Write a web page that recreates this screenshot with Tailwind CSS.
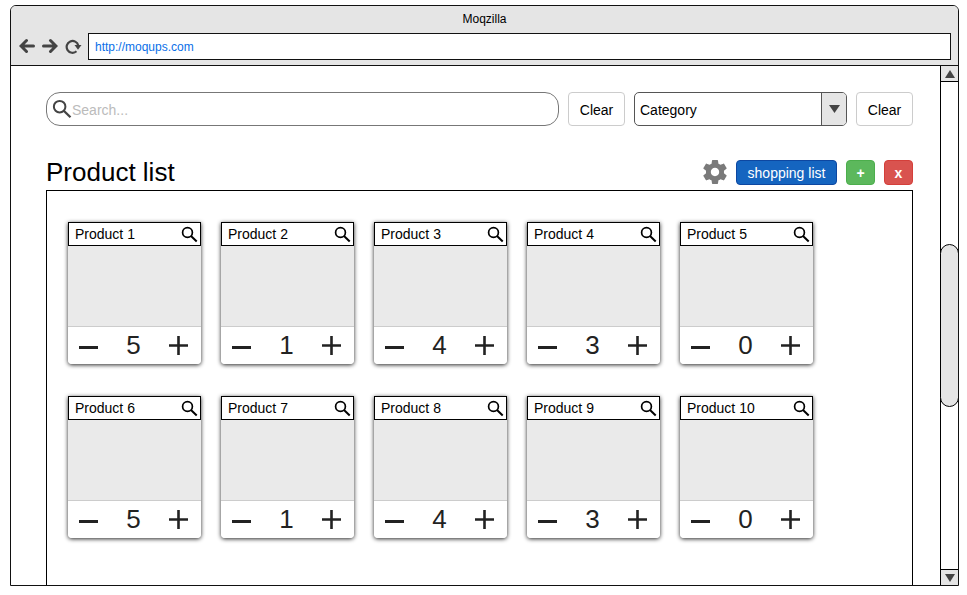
<!DOCTYPE html>
<html lang="en">
<head>
<meta charset="utf-8">
<meta name="viewport" content="width=device-width, initial-scale=1">
<title>Moqzilla</title>
<script src="https://cdn.jsdelivr.net/npm/@tailwindcss/browser@4"></script>
</head>
<body class="bg-white font-['Liberation_Sans',Arial,sans-serif] text-sm text-black">
<svg class="hidden" aria-hidden="true">
  <symbol id="lens" viewBox="0 0 17 17"><circle cx="6.500" cy="6.500" r="4.900" fill="none" stroke="currentColor" stroke-width="1.700"/><path d="M10 10l5.700 5.500" fill="none" stroke="currentColor" stroke-width="2"/></symbol>
  <symbol id="minus" viewBox="0 0 19 19"><path d="M0 10h19v3H0z" fill="#222"/></symbol>
  <symbol id="plus" viewBox="0 0 19 19"><path d="M8.200 0h2.600v8.200H19v2.600h-8.200V19H8.200v-8.200H0V8.200h8.200z" fill="#222"/></symbol>
</svg>
<div class="flex h-screen flex-col pt-[5px] pr-2 pb-[9px] pl-[10px]">
  <div class="flex min-h-0 flex-1 flex-col overflow-hidden rounded-t-md border border-[#111] bg-white">
    <header class="border-b border-[#111] bg-[#e5e5e5] pb-[5px]">
      <div class="py-[5px] text-center text-xs leading-[17px]">Moqzilla</div>
      <div class="flex items-center pr-[7px] pl-2 text-[#444]">
        <nav class="flex gap-[7px] pb-px" aria-label="Browser">
          <button type="button" aria-label="Back"><svg class="block size-4" viewBox="0 0 16 16" fill="none" stroke="currentColor" stroke-width="3" stroke-linecap="round"><path d="M14.500 8H2.500M7.500 2.500L2 8l5.500 5.500"/></svg></button>
          <button type="button" aria-label="Forward"><svg class="block size-4" viewBox="0 0 16 16" fill="none" stroke="currentColor" stroke-width="3" stroke-linecap="round"><path d="M1.500 8h12M8.500 2.500L14 8l-5.500 5.500"/></svg></button>
          <button type="button" aria-label="Reload"><svg class="block size-[17px]" viewBox="0 0 17 17" fill="none" stroke="currentColor" stroke-width="2.200"><path d="M11.500 13.300A5.900 5.900 0 1 1 13.300 7.500"/><path d="M9.500 7h7l-3.500 4.800z" fill="currentColor" stroke="none"/></svg></button>
        </nav>
        <input type="url" aria-label="Address" value="http://moqups.com" class="ml-1.5 h-[27px] min-w-0 flex-1 border border-[#111] bg-white px-1.5 text-xs text-[#0a6fe8] outline-none">
      </div>
    </header>
    <div class="flex min-h-0 flex-1">
      <main class="flex min-w-0 flex-1 flex-col overflow-hidden pt-[26px] pr-[27px] pl-[35px]">
        <form class="flex gap-[9px]">
          <label class="flex h-[34px] min-w-0 flex-1 items-center rounded-[14px] border border-[#777] pl-[5px] text-[#444]">
            <svg class="size-5 shrink-0"><use href="#lens"/></svg>
            <input type="search" aria-label="Search" placeholder="Search..." class="min-w-0 flex-1 bg-transparent pt-0.5 text-black outline-none placeholder:text-[#bbb]">
          </label>
          <button type="button" class="h-[34px] w-[57px] rounded-sm border border-[#ccc] pt-0.5">Clear</button>
          <div class="relative w-[213px]">
            <select aria-label="Category" class="h-[34px] w-full appearance-none rounded-[5px] border border-[#555] bg-white px-[5px] pt-0.5"><option>Category</option></select>
            <span class="pointer-events-none absolute inset-y-px right-px flex w-[25px] items-center justify-center rounded-r-sm border-l border-[#555] bg-[#e5e5e5]">
              <svg class="h-2 w-[11px]" viewBox="0 0 11 8"><path d="M0 0h11L5.500 8z" fill="#444"/></svg>
            </span>
          </div>
          <button type="button" class="h-[34px] w-[57px] rounded-sm border border-[#ccc] pt-0.5">Clear</button>
        </form>
        <div class="mt-[31px] flex items-center gap-[9px] pb-[3px]">
          <h1 class="flex-1 text-[26px] leading-[30px]">Product list</h1>
          <button type="button" aria-label="Settings"><svg class="block size-6" viewBox="2 2 20 20" fill="#7a7a7a"><path d="M19.430 12.980c.04-.32.07-.64.07-.98s-.03-.66-.07-.98l2.110-1.650c.19-.15.24-.42.12-.64l-2-3.460c-.12-.22-.39-.3-.61-.22l-2.490 1c-.52-.4-1.080-.73-1.690-.98l-.38-2.650C14.460 2.180 14.250 2 14 2h-4c-.25 0-.46.18-.49.42l-.38 2.650c-.61.25-1.170.59-1.690.98l-2.490-1c-.23-.09-.49 0-.61.22l-2 3.460c-.13.22-.07.49.12.64l2.110 1.650c-.04.32-.07.65-.07.98s.03.66.07.98l-2.110 1.650c-.19.15-.24.42-.12.64l2 3.460c.12.22.39.3.61.22l2.490-1c.52.4 1.080.73 1.690.98l.38 2.650c.03.24.24.42.49.42h4c.25 0 .46-.18.49-.42l.38-2.650c.61-.25 1.170-.59 1.690-.98l2.490 1c.23.09.49 0 .61-.22l2-3.460c.12-.22.07-.49-.12-.64l-2.110-1.650zM12 15.500c-1.930 0-3.500-1.570-3.500-3.500s1.570-3.500 3.500-3.500 3.500 1.570 3.500 3.500-1.570 3.500-3.500 3.500z"/></svg></button>
          <button type="button" class="h-[25px] w-[101px] rounded-sm border border-[#0d47a1] bg-[#1565c0] pt-0.5 text-white">shopping list</button>
          <button type="button" class="h-[25px] w-[29px] rounded-sm border border-[#4cae4c] bg-[#5cb85c] pt-0.5 font-bold text-white">+</button>
          <button type="button" class="h-[25px] w-[29px] rounded-sm border border-[#d43f3a] bg-[#d9534f] pt-0.5 font-bold text-white">x</button>
        </div>
        <section id="products" aria-label="Products" class="flex flex-1 flex-wrap content-start gap-x-5 gap-y-8 border border-b-0 border-black pt-[31px] pl-[21px]"></section>
      </main>
      <aside class="flex w-[18px] shrink-0 flex-col border-l border-black" aria-label="Scrollbar">
        <button type="button" aria-label="Scroll up" class="flex h-4 items-center justify-center border-b border-black bg-[#e5e5e5]"><svg class="h-2 w-[10px]" viewBox="0 0 10 8"><path d="M5 0l5 8H0z" fill="#444"/></svg></button>
        <div class="flex flex-1 flex-col">
          <div class="flex-1"></div>
          <div class="-mx-px flex-1 rounded-full border border-black bg-[#e5e5e5]"></div>
          <div class="flex-1"></div>
        </div>
        <button type="button" aria-label="Scroll down" class="flex h-4 items-center justify-center border-t border-black bg-[#e5e5e5]"><svg class="h-2 w-[10px]" viewBox="0 0 10 8"><path d="M0 0h10L5 8z" fill="#444"/></svg></button>
      </aside>
    </div>
  </div>
</div>
<template id="card">
  <article class="w-[133px] rounded-b-sm bg-[#eaeaea] shadow-[0_1px_4px_rgba(0,0,0,0.85)]">
    <div class="flex h-6 items-center justify-between border border-black bg-white pr-0.5 pl-1.5">
      <h2>Product</h2>
      <button type="button" aria-label="View product"><svg class="block size-[17px]"><use href="#lens"/></svg></button>
    </div>
    <div class="h-20"></div>
    <div class="flex h-[38px] items-center justify-between rounded-b-sm border-t border-[#ccc] bg-white pr-[13px] pl-[11px]">
      <button type="button" aria-label="Decrease"><svg class="block size-[19px]"><use href="#minus"/></svg></button>
      <output class="text-[26px] leading-[37px] text-[#222]"></output>
      <button type="button" aria-label="Increase"><svg class="block size-[19px]"><use href="#plus"/></svg></button>
    </div>
  </article>
</template>
<script>
  const quantities = [5, 1, 4, 3, 0, 5, 1, 4, 3, 0];
  const list = document.getElementById('products');
  const template = document.getElementById('card');
  quantities.forEach((quantity, index) => {
    const card = template.content.cloneNode(true);
    card.querySelector('h2').textContent = 'Product ' + (index + 1);
    card.querySelector('output').textContent = quantity;
    list.append(card);
  });
</script>
</body>
</html>
